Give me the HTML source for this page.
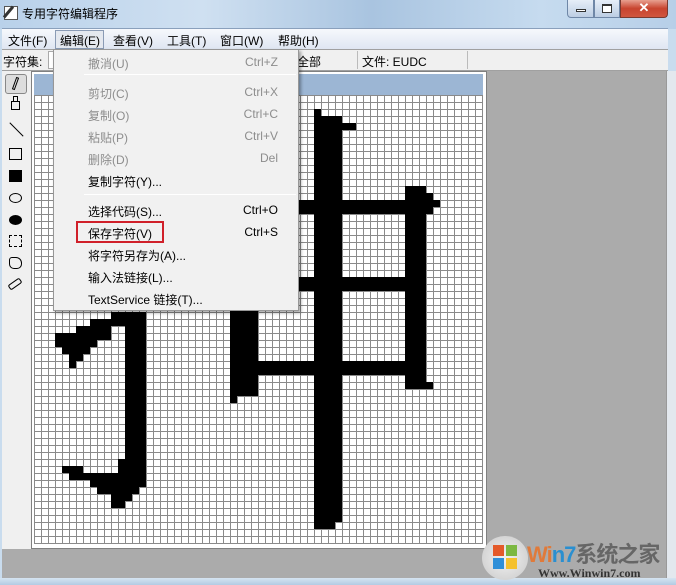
<!DOCTYPE html>
<html><head><meta charset="utf-8"><style>
*{margin:0;padding:0;box-sizing:border-box}
body{width:676px;height:585px;overflow:hidden;position:relative;background:#c9dcee;font-family:"Liberation Sans","Noto Sans CJK SC",sans-serif;font-size:12px;color:#000}
.a{position:absolute}
.title{left:0;top:0;width:676px;height:29px;background:linear-gradient(90deg,#b9d1ea,#cfe0f1 30%,#a9c4e0 55%,#c6dbef 80%,#b7cfe8)}
.menubar{left:2px;top:28px;width:666px;height:21px;background:linear-gradient(#f6f8fc,#dfe6f2);border-top:1px solid #8aa0bc}
.mi{position:absolute;top:3px;font-size:12px}
.row2{left:2px;top:49px;width:666px;height:22px;background:#f0f0f0;border-top:1px solid #a0a0a0;border-bottom:1px solid #a0a0a0}
.tb{left:2px;top:71px;width:29px;height:478px;background:#f0f0f0}
.frame{left:31px;top:71px;width:456px;height:478px;background:#fff;border:1px solid #808080}
.grid{left:34px;top:95px;width:449px;height:449px;background-color:#fff;background-image:linear-gradient(90deg,#8a8a8a 1px,transparent 1px),linear-gradient(#8a8a8a 1px,transparent 1px);background-size:7px 7px}
.b{position:absolute;background:#000}
.menu{left:53px;top:49px;width:246px;height:262px;background:#f1f1f1;border:1px solid #979797;box-shadow:2px 2px 3px rgba(0,0,0,.35)}
.it{position:absolute;left:34px;font-size:12px}
.sc{position:absolute;right:20px;font-size:12px;text-align:right}
.g{color:#8d8d8d}
.sep{position:absolute;left:30px;right:2px;height:1px;background:#d8d8d8;border-bottom:1px solid #fff}
</style></head><body>
<div class="a title"></div>
<div class="a" style="left:4px;top:6px;width:14px;height:14px;border:1px solid #555;background:#fff"></div>
<div class="a" style="left:7px;top:5px;width:3px;height:14px;background:#333;transform:rotate(40deg)"></div>
<div class="a" style="left:22px;top:5px;font-size:12px">专用字符编辑程序</div>
<div class="a" style="left:567px;top:0;width:27px;height:18px;border:1px solid #6f87a7;border-top:0;border-radius:0 0 0 4px;background:linear-gradient(#e6eef8,#bccde3)"></div>
<div class="a" style="left:576px;top:9px;width:10px;height:3px;border:1px solid #333;background:#fff"></div>
<div class="a" style="left:594px;top:0;width:26px;height:18px;border:1px solid #6f87a7;border-top:0;background:linear-gradient(#e6eef8,#bccde3)"></div>
<div class="a" style="left:602px;top:4px;width:10px;height:9px;border:1px solid #333;border-top-width:2px;background:#fff"></div>
<div class="a" style="left:620px;top:0;width:48px;height:18px;border:1px solid #7a3a30;border-top:0;border-radius:0 0 4px 0;background:linear-gradient(#e8a090,#c8442f 50%,#d0563f);color:#fff;font-weight:bold;text-align:center;font-size:13px;line-height:16px">✕</div>

<div class="a menubar">
<span class="mi" style="left:6px">文件(F)</span>
<span class="a" style="left:53px;top:1px;width:49px;height:19px;border:1px solid #8a9bb5;background:#e4e8ef"></span>
<span class="mi" style="left:58px">编辑(E)</span>
<span class="mi" style="left:111px">查看(V)</span>
<span class="mi" style="left:165px">工具(T)</span>
<span class="mi" style="left:218px">窗口(W)</span>
<span class="mi" style="left:276px">帮助(H)</span>
</div>
<div class="a row2">
<span class="a" style="left:1px;top:3px">字符集:</span>
<span class="a" style="left:46px;top:1px;width:10px;height:18px;border:1px solid #aaa;background:#fff"></span>
<span class="a" style="left:295px;top:3px">全部</span>
<span class="a" style="left:355px;top:1px;width:1px;height:18px;background:#bbb"></span>
<span class="a" style="left:360px;top:3px">文件: EUDC</span>
<span class="a" style="left:465px;top:1px;width:1px;height:18px;background:#bbb"></span>
</div>
<div class="a" style="left:2px;top:549px;width:664px;height:30px;background:#ababab"></div>
<div class="a tb">
<div class="a" style="left:3px;top:3px;width:22px;height:20px;border:1px solid #888;border-radius:3px;background:#ddd"></div>
<div class="a" style="left:12px;top:6px;width:3px;height:13px;border:1px solid #000;transform:rotate(20deg)"></div>
<div class="a" style="left:9px;top:30px;width:9px;height:9px;border:1px solid #000"></div>
<div class="a" style="left:11px;top:25px;width:5px;height:6px;border:1px solid #000"></div>
<div class="a" style="left:5px;top:58px;width:19px;height:1px;background:#000;transform:rotate(45deg)"></div>
<div class="a" style="left:7px;top:77px;width:13px;height:12px;border:1px solid #000"></div>
<div class="a" style="left:7px;top:99px;width:13px;height:12px;background:#000"></div>
<div class="a" style="left:7px;top:122px;width:13px;height:10px;border:1px solid #000;border-radius:50%"></div>
<div class="a" style="left:7px;top:144px;width:13px;height:10px;background:#000;border-radius:50%"></div>
<div class="a" style="left:7px;top:164px;width:13px;height:12px;border:1px dashed #000"></div>
<div class="a" style="left:7px;top:186px;width:13px;height:12px;border:1px solid #000;border-radius:3px 6px 5px 5px"></div>
<div class="a" style="left:6px;top:210px;width:14px;height:6px;border:1px solid #000;transform:rotate(-35deg);border-radius:2px"></div>
</div>
<div class="a frame"></div>
<div class="a" style="left:34px;top:74px;width:449px;height:21px;background:#9cb6d4"></div>
<div class="a grid">
<div class="b" style="left:280px;top:14px;width:7px;height:7px"></div>
<div class="b" style="left:280px;top:21px;width:28px;height:406px"></div>
<div class="b" style="left:280px;top:427px;width:21px;height:7px"></div>
<div class="b" style="left:308px;top:28px;width:14px;height:7px"></div>
<div class="b" style="left:196px;top:105px;width:203px;height:14px"></div>
<div class="b" style="left:399px;top:105px;width:7px;height:7px"></div>
<div class="b" style="left:196px;top:182px;width:196px;height:14px"></div>
<div class="b" style="left:196px;top:266px;width:196px;height:14px"></div>
<div class="b" style="left:196px;top:105px;width:28px;height:196px"></div>
<div class="b" style="left:196px;top:301px;width:7px;height:7px"></div>
<div class="b" style="left:371px;top:91px;width:21px;height:203px"></div>
<div class="b" style="left:392px;top:98px;width:7px;height:7px"></div>
<div class="b" style="left:392px;top:287px;width:7px;height:7px"></div>
<div class="b" style="left:91px;top:217px;width:21px;height:168px"></div>
<div class="b" style="left:77px;top:217px;width:14px;height:7px"></div>
<div class="b" style="left:56px;top:224px;width:35px;height:7px"></div>
<div class="b" style="left:42px;top:231px;width:35px;height:7px"></div>
<div class="b" style="left:21px;top:238px;width:56px;height:7px"></div>
<div class="b" style="left:21px;top:245px;width:42px;height:7px"></div>
<div class="b" style="left:28px;top:252px;width:28px;height:7px"></div>
<div class="b" style="left:35px;top:259px;width:14px;height:7px"></div>
<div class="b" style="left:35px;top:266px;width:7px;height:7px"></div>
<div class="b" style="left:28px;top:371px;width:21px;height:7px"></div>
<div class="b" style="left:84px;top:364px;width:28px;height:14px"></div>
<div class="b" style="left:35px;top:378px;width:77px;height:7px"></div>
<div class="b" style="left:56px;top:385px;width:56px;height:7px"></div>
<div class="b" style="left:63px;top:392px;width:42px;height:7px"></div>
<div class="b" style="left:77px;top:399px;width:21px;height:7px"></div>
<div class="b" style="left:77px;top:406px;width:14px;height:7px"></div>
</div>
<div class="a" style="left:487px;top:71px;width:179px;height:508px;background:#ababab"></div>
<div class="a" style="left:666px;top:71px;width:10px;height:508px;background:#e3e8ee;border-left:1px solid #999"></div>
<div class="a" style="left:0;top:578px;width:676px;height:7px;background:linear-gradient(#d6e4f1,#b3cbe3)"></div>
<div class="a" style="left:482px;top:536px;width:46px;height:44px;border-radius:50%;background:radial-gradient(#f2f2f2,#c8c8c8)"></div>
<div class="a" style="left:493px;top:545px;width:11px;height:11px;background:#e45a2a"></div>
<div class="a" style="left:506px;top:545px;width:11px;height:11px;background:#7cb842"></div>
<div class="a" style="left:493px;top:558px;width:11px;height:11px;background:#2f8fd8"></div>
<div class="a" style="left:506px;top:558px;width:11px;height:11px;background:#f5c12d"></div>
<div class="a" style="left:527px;top:537px;font-size:22px;font-weight:bold;color:#e07a3a;letter-spacing:-1px">Wi<span style="color:#2a8fd0">n7</span><span style="color:#666">系统之家</span></div>
<div class="a" style="left:538px;top:566px;font-family:'Liberation Serif',serif;font-weight:bold;font-size:12px;color:#333">Www.Winwin7.com</div>

<div class="a menu">
<span class="it g" style="top:5px">撤消(U)</span><span class="sc g" style="top:5px">Ctrl+Z</span>
<div class="sep" style="top:24px"></div>
<span class="it g" style="top:35px">剪切(C)</span><span class="sc g" style="top:35px">Ctrl+X</span>
<span class="it g" style="top:57px">复制(O)</span><span class="sc g" style="top:57px">Ctrl+C</span>
<span class="it g" style="top:79px">粘贴(P)</span><span class="sc g" style="top:79px">Ctrl+V</span>
<span class="it g" style="top:101px">删除(D)</span><span class="sc g" style="top:101px">Del</span>
<span class="it" style="top:123px">复制字符(Y)...</span>
<div class="sep" style="top:144px"></div>
<span class="it" style="top:153px">选择代码(S)...</span><span class="sc" style="top:153px">Ctrl+O</span>
<div class="a" style="left:22px;top:171px;width:88px;height:22px;border:2px solid #d0202a"></div>
<span class="it" style="top:175px">保存字符(V)</span><span class="sc" style="top:175px">Ctrl+S</span>
<span class="it" style="top:197px">将字符另存为(A)...</span>
<span class="it" style="top:219px">输入法链接(L)...</span>
<span class="it" style="top:241px">TextService 链接(T)...</span>
</div>
</body></html>
